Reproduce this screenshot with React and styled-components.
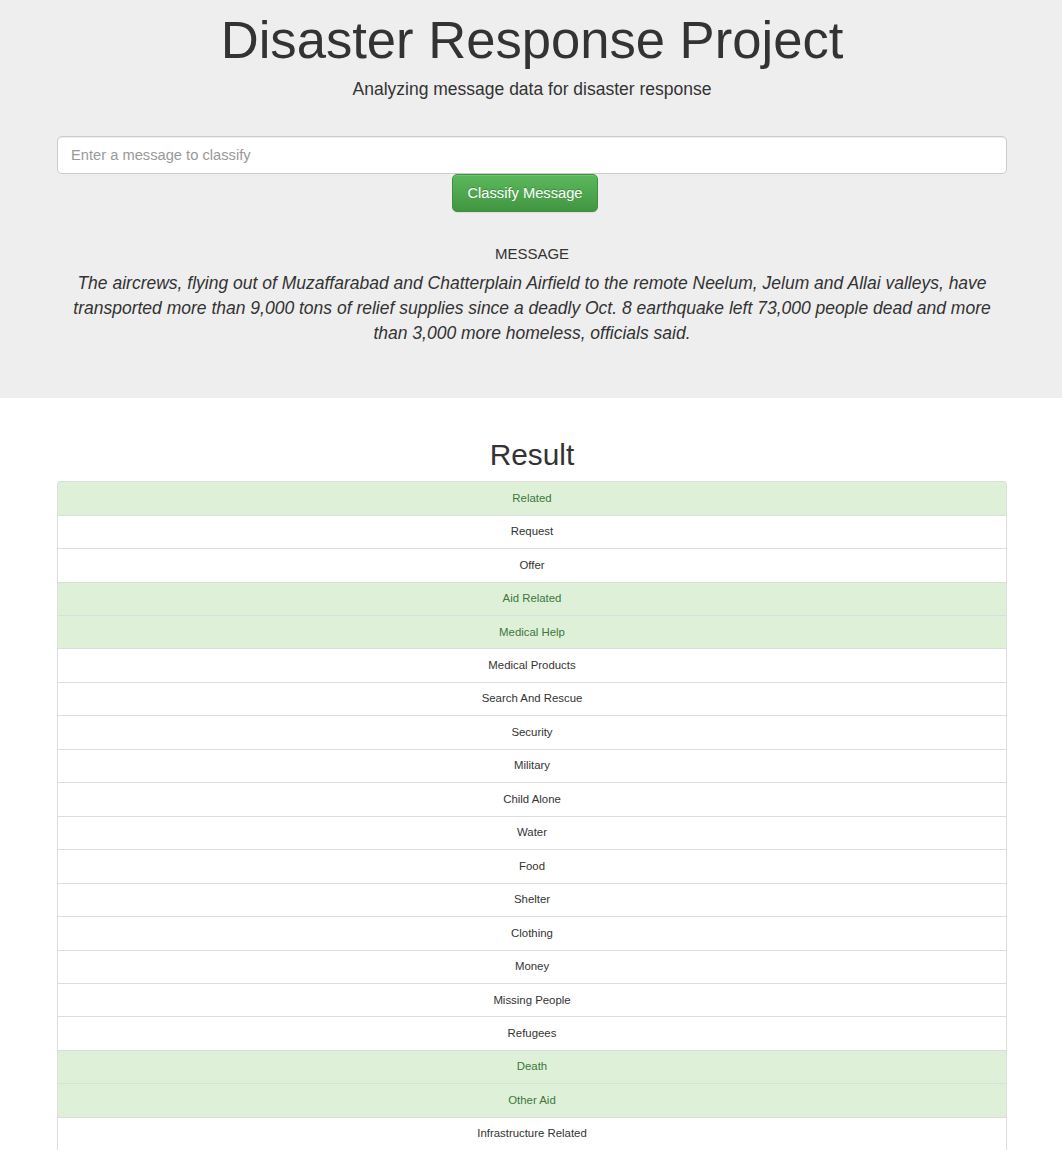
import React from "react";
import styled, { createGlobalStyle } from "styled-components";

const GlobalStyle = createGlobalStyle`
  body {
    margin: 0;
    background: #fff;
    color: #333;
    font-family: "Liberation Sans", Arial, Helvetica, sans-serif;
  }
  * { box-sizing: border-box; }
`;

const Jumbotron = styled.div`
  background: #eee;
  padding: 12px 0 52px;
`;

const Container = styled.div`
  width: 950px;
  margin: 0 55px 0 57px;
`;

const Title = styled.h1`
  margin: 0;
  font-size: 52.6px;
  line-height: 56px;
  font-weight: 400;
  text-align: center;
  color: #333;
`;

const Subtitle = styled.p`
  margin: 9px 0 0;
  font-size: 17.5px;
  line-height: 24px;
  text-align: center;
`;

const Form = styled.form`
  margin-top: 35px;
  display: flex;
  flex-direction: column;
`;

const Input = styled.input`
  width: 100%;
  height: 38px;
  padding: 0 13px;
  border: 1px solid #ccc;
  border-radius: 5px;
  background: #fff;
  font-family: inherit;
  font-size: 14.7px;
  color: #555;
  box-shadow: inset 0 1px 1px rgba(0, 0, 0, 0.075);
  outline: none;

  &::placeholder {
    color: #999;
  }
`;

const ButtonRow = styled.div`
  display: flex;
  justify-content: center;
  padding-right: 14px;
`;

const Button = styled.button`
  height: 38px;
  width: 146px;
  border: 1px solid #3e8f3e;
  border-radius: 5px;
  background: linear-gradient(to bottom, #5cb85c 0%, #419641 100%);
  color: #fff;
  font-family: inherit;
  font-size: 14.7px;
  text-shadow: 0 -1px 0 rgba(0, 0, 0, 0.2);
  box-shadow: inset 0 1px 0 rgba(255, 255, 255, 0.15), 0 1px 1px rgba(0, 0, 0, 0.075);
  cursor: pointer;
`;

const Label = styled.h4`
  margin: 31px 0 0;
  font-size: 15px;
  line-height: 21px;
  font-weight: 400;
  text-align: center;
  text-transform: uppercase;
`;

const Message = styled.p`
  margin: 7px 15px 0;
  font-size: 17.5px;
  line-height: 25px;
  font-style: italic;
  text-align: center;
`;

const ResultTitle = styled.h1`
  margin: 41px 0 11px;
  font-size: 29.8px;
  line-height: 31.2px;
  font-weight: 400;
  text-align: center;
`;

const List = styled.ul`
  margin: 0 0 20px;
  padding: 0;
  list-style: none;
`;

const Item = styled.li`
  margin-bottom: -1px;
  padding: 7.5px 12px 8.5px;
  border: 1px solid #ddd;
  background: ${p => (p.$hit ? "#dff0d8" : "#fff")};
  color: ${p => (p.$hit ? "#3c763d" : "#333")};
  font-size: 11.4px;
  line-height: 16.45px;
  text-align: center;

  &:first-child {
    border-top-left-radius: 3px;
    border-top-right-radius: 3px;
  }
  &:last-child {
    margin-bottom: 0;
    border-bottom-left-radius: 3px;
    border-bottom-right-radius: 3px;
  }
`;

const results = [
  ["Related", 1],
  ["Request", 0],
  ["Offer", 0],
  ["Aid Related", 1],
  ["Medical Help", 1],
  ["Medical Products", 0],
  ["Search And Rescue", 0],
  ["Security", 0],
  ["Military", 0],
  ["Child Alone", 0],
  ["Water", 0],
  ["Food", 0],
  ["Shelter", 0],
  ["Clothing", 0],
  ["Money", 0],
  ["Missing People", 0],
  ["Refugees", 0],
  ["Death", 1],
  ["Other Aid", 1],
  ["Infrastructure Related", 0],
  ["Transport", 0],
  ["Buildings", 0],
  ["Electricity", 0],
  ["Tools", 0],
  ["Hospitals", 0],
  ["Shops", 0],
  ["Aid Centers", 0],
  ["Other Infrastructure", 0],
  ["Weather Related", 1],
  ["Floods", 0],
  ["Storm", 0],
  ["Fire", 0],
  ["Earthquake", 1],
  ["Cold", 0],
  ["Other Weather", 0],
  ["Direct Report", 0],
];

const App = () => {
  return (
    <>
      <GlobalStyle />
      <Jumbotron>
        <Container>
          <Title>Disaster Response Project</Title>
          <Subtitle>Analyzing message data for disaster response</Subtitle>
          <Form onSubmit={e => e.preventDefault()}>
            <Input type="text" placeholder="Enter a message to classify" />
            <ButtonRow>
              <Button type="submit">Classify Message</Button>
            </ButtonRow>
          </Form>
          <Label>Message</Label>
          <Message>
            The aircrews, flying out of Muzaffarabad and Chatterplain Airfield to the remote Neelum,
            Jelum and Allai valleys, have transported more than 9,000 tons of relief supplies since a
            deadly Oct. 8 earthquake left 73,000 people dead and more than 3,000 more homeless,
            officials said.
          </Message>
        </Container>
      </Jumbotron>
      <Container>
        <ResultTitle>Result</ResultTitle>
        <List>
          {results.map(([name, hit]) => (
            <Item key={name} $hit={!!hit}>
              {name}
            </Item>
          ))}
        </List>
      </Container>
    </>
  );
};

export default App;
